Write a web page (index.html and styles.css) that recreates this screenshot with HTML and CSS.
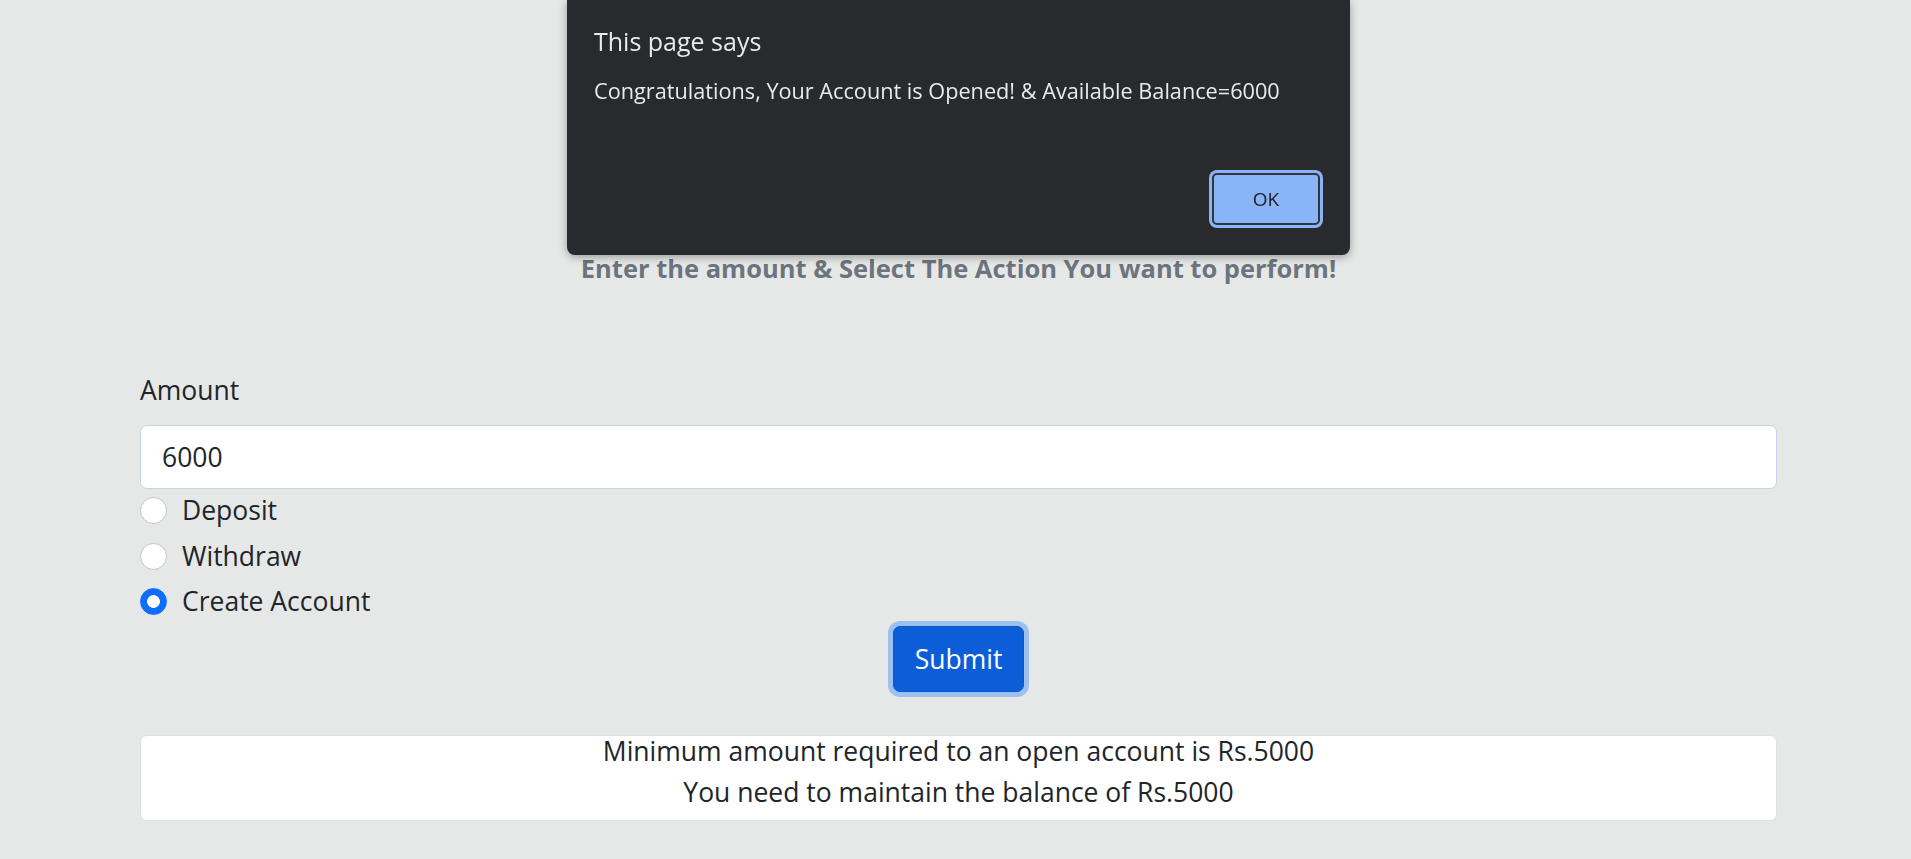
FILE: index.html
```html
<!DOCTYPE html>
<html lang="en">
<head>
<meta charset="utf-8">
<title>Bank</title>
<link rel="stylesheet" href="styles.css">
</head>
<body>
<main class="container">
  <h5 class="subtitle">Enter the amount &amp; Select The Action You want to perform!</h5>
  <form class="form">
    <label class="form-label" for="amount">Amount</label>
    <input class="form-control" id="amount" type="text" value="6000">
    <div class="form-check">
      <input class="radio" type="radio" name="action" id="dep">
      <label class="check-label" for="dep">Deposit</label>
    </div>
    <div class="form-check">
      <input class="radio" type="radio" name="action" id="wd">
      <label class="check-label" for="wd">Withdraw</label>
    </div>
    <div class="form-check">
      <input class="radio" type="radio" name="action" id="ca" checked>
      <label class="check-label" for="ca">Create Account</label>
    </div>
    <div class="submit-row">
      <button class="btn-submit" type="button">Submit</button>
    </div>
  </form>
  <div class="info-box">
    <div class="info-line">Minimum amount required to an open account is Rs.5000</div>
    <div class="info-line">You need to maintain the balance of Rs.5000</div>
  </div>
</main>

<div class="dialog">
  <div class="dialog-title">This page says</div>
  <div class="dialog-msg">Congratulations, Your Account is Opened! &amp; Available Balance=6000</div>
  <div class="dialog-actions">
    <button class="dialog-ok" type="button">OK</button>
  </div>
</div>
</body>
</html>
```
FILE: styles.css
```css
html, body {
  margin: 0;
  padding: 0;
}
body {
  background: #e6e8e7;
  font-family: "Open Sans", "Noto Sans", sans-serif;
  color: #212529;
  font-size: 26.5px;
  line-height: 42px;
}
.container {
  padding: 250px 134px 0 140px;
}
.subtitle {
  margin: 0;
  text-align: center;
  font-size: 25.5px;
  line-height: 36px;
  font-weight: 700;
  color: #6c757d;
}
.form {
  margin-top: 83px;
}
.form-label {
  display: block;
  margin-bottom: 14px;
}
.form-control {
  display: block;
  box-sizing: border-box;
  width: 100%;
  height: 64px;
  margin: 0;
  padding: 0 21px;
  border: 1px solid #c5d3e8;
  border-radius: 7px;
  background: #fff;
  font: inherit;
  color: #212529;
  outline: none;
}
.form-check {
  display: flex;
  align-items: flex-start;
  height: 42px;
  margin-bottom: 3.5px;
}
.radio {
  appearance: none;
  -webkit-appearance: none;
  box-sizing: border-box;
  width: 27px;
  height: 27px;
  margin: 8px 15px 0 0;
  border: 1px solid #c4c4c4;
  border-radius: 50%;
  background: #fff;
  flex: none;
}
.radio:checked {
  border-color: #0d6efd;
  background: radial-gradient(circle closest-side, #fff 48%, #0d6efd 54%);
}
.check-label {
  line-height: 42px;
}
.submit-row {
  display: flex;
  justify-content: center;
}
.btn-submit {
  box-sizing: border-box;
  height: 66px;
  padding: 0 21px;
  border: 1px solid #0a58ca;
  border-radius: 7px;
  background: #0b5ed7;
  color: #fff;
  font: inherit;
  box-shadow: 0 0 0 5px rgba(49, 132, 253, 0.4);
}
.info-box {
  margin-top: 43px;
  padding-bottom: 2px;
  border: 1px solid #dee2e6;
  border-radius: 7px;
  background: #fff;
  text-align: center;
}
.info-line {
  line-height: 31px;
  padding-bottom: 10px;
}

.dialog {
  position: fixed;
  top: 0;
  left: 567px;
  width: 783px;
  height: 255px;
  box-sizing: border-box;
  padding: 0 27px;
  background: #292a2d;
  border-radius: 0 0 8px 8px;
  box-shadow: 0 2px 8px rgba(0, 0, 0, 0.35);
  color: #e8eaed;
  font-family: "Open Sans", "Noto Sans", sans-serif;
  display: flex;
  flex-direction: column;
}
.dialog-title {
  margin-top: 24px;
  font-size: 25px;
  line-height: 34px;
}
.dialog-msg {
  margin-top: 18px;
  font-size: 21.7px;
  line-height: 30px;
}
.dialog-actions {
  display: flex;
  justify-content: flex-end;
  margin-top: 67px;
}
.dialog-ok {
  box-sizing: border-box;
  width: 108px;
  height: 52px;
  margin-right: 3px;
  border: 2px solid #333538;
  border-radius: 5px;
  background: #8ab4f8;
  color: #202124;
  font-family: "Open Sans", "Noto Sans", sans-serif;
  font-size: 19px;
  box-shadow: 0 0 0 3px #8ab4f8;
}
```
